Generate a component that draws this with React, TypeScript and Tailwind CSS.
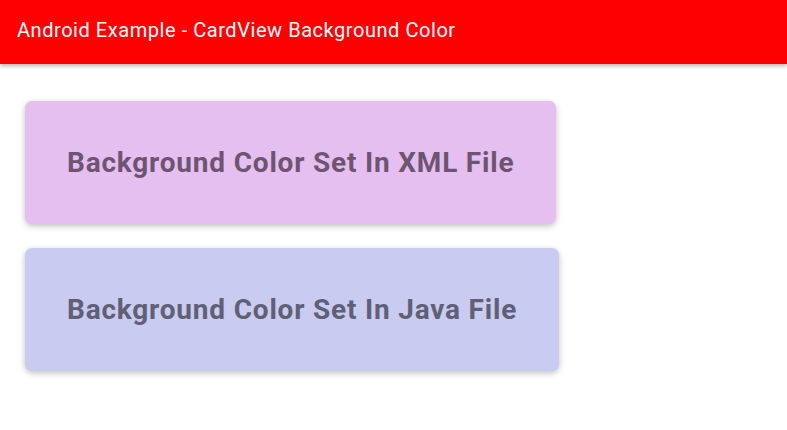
export default function App() {
  return (
    <div className="h-[430px] w-[787px] overflow-hidden bg-white font-['Roboto',sans-serif]">
      <header className="relative z-10 flex h-16 items-center bg-[#ff0000] px-[17px] pb-1 shadow-[0_2px_4px_rgba(0,0,0,0.3)]">
        <h1 className="text-[20px] tracking-[0.55px] text-white">Android Example - CardView Background Color</h1>
      </header>

      <main className="flex flex-col items-start gap-6 pl-[25px] pt-[37px]">
        <div className="rounded-[7px] bg-[#e5bfef] px-[42px] py-[45px] shadow-[0_2px_6px_rgba(0,0,0,0.25)]">
          <p className="text-[28px] leading-[33px] font-bold tracking-[0.8px] text-[#6d5572]">Background Color Set In XML File</p>
        </div>
        <div className="rounded-[7px] bg-[#c9cbf0] px-[42px] py-[45px] shadow-[0_2px_6px_rgba(0,0,0,0.25)]">
          <p className="text-[28px] leading-[33px] font-bold tracking-[0.8px] text-[#5f6075]">Background Color Set In Java File</p>
        </div>
      </main>
    </div>
  );
}
